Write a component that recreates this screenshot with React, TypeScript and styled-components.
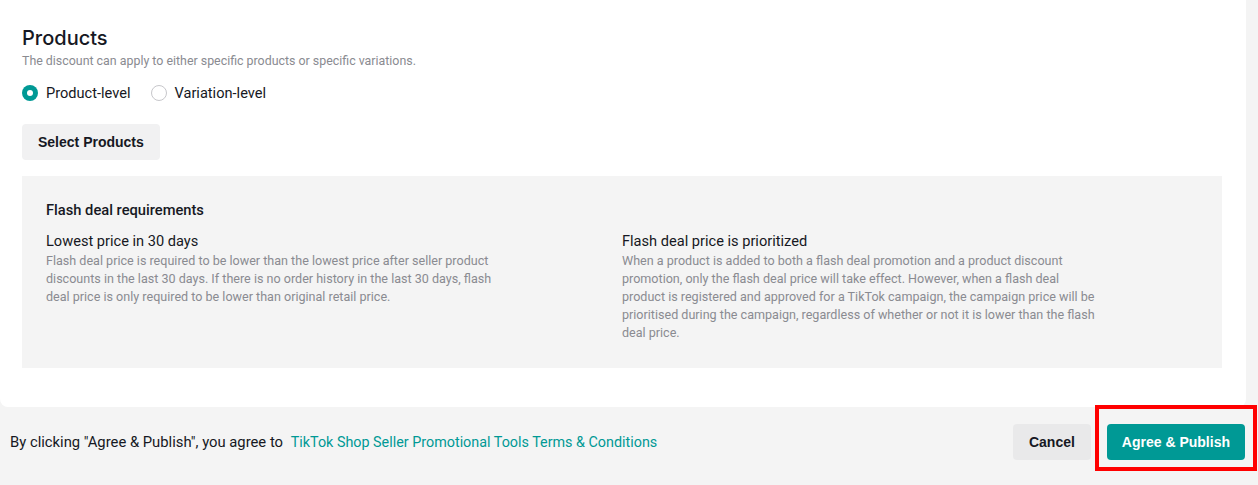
import React from "react";
import styled, { createGlobalStyle } from "styled-components";

const GlobalStyle = createGlobalStyle`
  html, body { margin: 0; padding: 0; background: #f4f4f4; }
  body { font-family: Roboto, "Liberation Sans", Arial, sans-serif; -webkit-font-smoothing: antialiased; }
  * { box-sizing: border-box; }
`;

const Page = styled.div`
  position: relative;
  width: 1258px;
  height: 485px;
  overflow: hidden;
  background: #f4f4f4;
  display: flex;
  flex-direction: column;
`;

const Card = styled.section`
  width: 1246px;
  background: #ffffff;
  border-radius: 0 0 8px 8px;
  padding: 24px 24px 39px 22px;
  display: flex;
  flex-direction: column;
`;

const Heading = styled.h2`
  margin: 0;
  font-family: Inter, Roboto, sans-serif;
  font-size: 20px;
  line-height: 28px;
  font-weight: 500;
  color: #161823;
`;

const Sub = styled.p`
  margin: 0;
  font-size: 12.4px;
  line-height: 18px;
  color: #8a8b91;
`;

const RadioGroup = styled.div`
  margin-top: 12px;
  display: flex;
  align-items: center;
  gap: 20px;
  height: 22px;
`;

const RadioLabel = styled.label`
  display: flex;
  align-items: center;
  gap: 8px;
  font-size: 14.6px;
  line-height: 22px;
  color: #161823;
`;

const RadioDot = styled.span<{ $checked?: boolean }>`
  width: 16px;
  height: 16px;
  border-radius: 50%;
  flex: none;
  background: ${(p) => (p.$checked ? "#009995" : "#ffffff")};
  border: ${(p) => (p.$checked ? "none" : "1px solid #c7c7cb")};
  display: flex;
  align-items: center;
  justify-content: center;
  &::after {
    content: "";
    display: ${(p) => (p.$checked ? "block" : "none")};
    width: 6px;
    height: 6px;
    border-radius: 50%;
    background: #ffffff;
  }
`;

const Button = styled.button<{ $variant?: "gray" | "light" | "primary" }>`
  height: 36px;
  padding: 0 ${(p) => (p.$variant === "primary" ? 15 : 16)}px;
  border: none;
  border-radius: 4px;
  font-family: "Liberation Sans", Arial, sans-serif;
  font-weight: 700;
  font-size: 14px;
  cursor: pointer;
  color: ${(p) => (p.$variant === "primary" ? "#ffffff" : "#161823")};
  background: ${(p) =>
    p.$variant === "primary" ? "#009995" : p.$variant === "light" ? "#e9e9ea" : "#f1f1f2"};
`;

const SelectButton = styled(Button)`
  margin-top: 20px;
  align-self: flex-start;
`;

const Panel = styled.div`
  margin-top: 16px;
  background: #f4f4f4;
  padding: 24px 24px 26px;
`;

const PanelTitle = styled.div`
  font-size: 14.7px;
  line-height: 20px;
  font-weight: 500;
  color: #161823;
  margin-bottom: 10px;
`;

const Columns = styled.div`
  display: grid;
  grid-template-columns: 1fr 1fr;
`;

const Col = styled.div<{ $max: number }>`
  max-width: ${(p) => p.$max}px;
`;

const ColTitle = styled.div`
  font-size: 14.6px;
  line-height: 22px;
  color: #161823;
`;

const ColBody = styled.p`
  margin: 0;
  font-size: 12.57px;
  line-height: 18px;
  color: #8a8b91;
`;

const Footer = styled.footer`
  flex: 1;
  display: flex;
  align-items: flex-start;
  justify-content: space-between;
  padding: 17px 13px 0 10px;
`;

const Agreement = styled.div`
  height: 36px;
  display: flex;
  align-items: center;
  font-size: 14.8px;
  color: #161823;
  white-space: pre;
`;

const Link = styled.a`
  color: #009995;
  text-decoration: none;
  margin-left: 4px;
  font-size: 14.35px;
`;

const Actions = styled.div`
  display: flex;
  gap: 16px;
`;

const Highlight = styled.div`
  position: absolute;
  left: 1095px;
  top: 405px;
  width: 162px;
  height: 66px;
  border: 4px solid #ff0000;
  pointer-events: none;
`;

export default function App() {
  return (
    <Page>
      <GlobalStyle />
      <Card>
        <Heading>Products</Heading>
        <Sub>The discount can apply to either specific products or specific variations.</Sub>
        <RadioGroup>
          <RadioLabel>
            <RadioDot $checked />
            Product-level
          </RadioLabel>
          <RadioLabel>
            <RadioDot />
            Variation-level
          </RadioLabel>
        </RadioGroup>
        <SelectButton $variant="gray">Select Products</SelectButton>
        <Panel>
          <PanelTitle>Flash deal requirements</PanelTitle>
          <Columns>
            <Col $max={460}>
              <ColTitle>Lowest price in 30 days</ColTitle>
              <ColBody>
                Flash deal price is required to be lower than the lowest price after seller product
                discounts in the last 30 days. If there is no order history in the last 30 days, flash
                deal price is only required to be lower than original retail price.
              </ColBody>
            </Col>
            <Col $max={480}>
              <ColTitle>Flash deal price is prioritized</ColTitle>
              <ColBody>
                When a product is added to both a flash deal promotion and a product discount
                promotion, only the flash deal price will take effect. However, when a flash deal
                product is registered and approved for a TikTok campaign, the campaign price will be
                prioritised during the campaign, regardless of whether or not it is lower than the flash
                deal price.
              </ColBody>
            </Col>
          </Columns>
        </Panel>
      </Card>
      <Footer>
        <Agreement>
          By clicking "Agree &amp; Publish", you agree to <Link href="#">TikTok Shop Seller Promotional Tools Terms &amp; Conditions</Link>
        </Agreement>
        <Actions>
          <Button $variant="light">Cancel</Button>
          <Button $variant="primary">Agree &amp; Publish</Button>
        </Actions>
      </Footer>
      <Highlight />
    </Page>
  );
}
